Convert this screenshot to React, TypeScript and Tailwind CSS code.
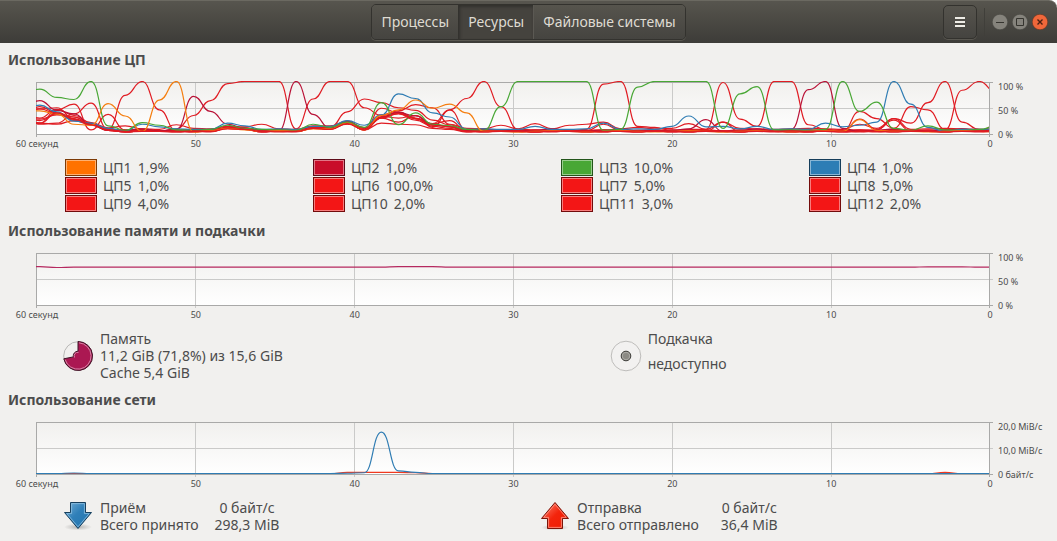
import React, { useState } from "react";

type Line = { color: string; values: number[] };
type ChartProps = {
  id: string;
  lines: Line[];
  labels: string[];
  width?: number;
};

const RED = "#e01b22";
const STEP = 17.08;
const START = -13.3;

const BUSY: [number, number][] = [
  [0, 35], [1, 33], [2, 38], [3, 30], [4, 18], [5, 7],
  [12, 11], [13, 9], [17, 11], [18, 10], [19, 20], [20, 8], [21, 32],
  [22, 40], [23, 30], [24, 18], [25, 14],
];

// fills the quiet parts of a graph, peaks are given as [index, value]
const series = (base: number[], peaks: [number, number][]) => {
  const values = Array.from({ length: 58 }, (_, i) => base[i % base.length]);
  BUSY.forEach(([i, v]) => {
    values[i] = v + base[i % base.length] - 5;
  });
  peaks.forEach(([i, v]) => {
    values[i] = v;
  });
  return values;
};

const cpuLines: Line[] = [
  { color: RED, values: series([4, 5, 3, 6], [[0, 22], [1, 20], [2, 46], [3, 57], [4, 7], [5, 37], [6, 7], [21, 49], [22, 40], [23, 30], [34, 18], [41, 22], [49, 43], [50, 29], [51, 10], [52, 52], [53, 46], [54, 8]]) },
  { color: RED, values: series([6, 5, 7, 4], [[1, 18], [2, 20], [3, 38], [4, 59], [5, 8], [6, 74], [7, 101], [8, 46], [9, 5], [25, 46], [26, 68], [27, 101], [28, 52], [29, 8], [51, 29], [52, 20], [53, 60], [54, 101], [55, 22], [56, 8]]) },
  { color: RED, values: series([3, 5, 4], [[1, 48], [2, 38], [9, 9], [10, 35], [11, 64], [12, 97], [13, 101], [14, 101], [15, 101], [16, 9], [17, 67], [18, 101], [19, 101], [20, 50], [21, 35], [54, 7], [55, 84], [56, 101], [57, 80]]) },
  { color: RED, values: series([5, 7, 6, 8], [[0, 45], [1, 48], [2, 50], [3, 28], [18, 12], [19, 42], [20, 67], [21, 60], [22, 50], [23, 45], [24, 26], [25, 17], [33, 8], [34, 96], [35, 101], [36, 14], [37, 12], [40, 8], [41, 99], [42, 28], [43, 14], [44, 101], [45, 101], [46, 17], [57, 16]]) },
  { color: RED, values: series([8, 9, 10, 9], [[1, 30], [2, 47], [3, 35], [6, 15], [7, 9], [9, 17], [14, 18], [22, 44], [23, 56], [24, 50], [25, 18], [28, 16], [30, 19], [32, 16], [33, 18], [34, 22], [36, 12], [39, 19], [41, 22], [49, 18], [51, 29]]) },
  { color: RED, values: series([4, 3, 5, 4, 6], [[1, 28], [2, 36], [3, 32], [22, 22], [23, 35], [24, 12], [25, 46], [26, 6], [49, 28], [50, 8], [51, 26]]) },
  { color: RED, values: series([6, 7, 5], [[1, 52], [2, 40], [3, 26], [22, 30], [23, 35], [25, 25], [26, 5]]) },
  { color: RED, values: series([4, 4, 3, 5], [[1, 20], [2, 18], [3, 25], [21, 20], [22, 18], [23, 17], [24, 10], [25, 8]]) },
  { color: "#b91237", values: series([5, 4, 6, 9], [[0, 50], [1, 64], [2, 45], [3, 38], [4, 16], [9, 8], [10, 72], [11, 43], [12, 18], [13, 10], [15, 5], [16, 101], [17, 37], [18, 10], [40, 27], [45, 8], [46, 85], [47, 101], [48, 10]]) },
  { color: "#2f7cb3", values: series([9, 8, 8], [[0, 48], [1, 55], [2, 42], [3, 24], [4, 20], [6, 5], [7, 18], [8, 13], [12, 20], [13, 15], [19, 25], [20, 16], [21, 36], [22, 77], [23, 68], [24, 40], [25, 32], [26, 8], [30, 14], [34, 20], [38, 14], [39, 34], [40, 13], [41, 14], [43, 14], [47, 20], [48, 13], [49, 16], [50, 22], [51, 101], [52, 57], [53, 12], [54, 4]]) },
  { color: "#48a735", values: series([7, 6, 8], [[0, 80], [1, 86], [2, 70], [3, 66], [4, 101], [5, 15], [6, 6], [7, 21], [8, 16], [12, 16], [17, 18], [19, 22], [20, 12], [21, 60], [22, 17], [23, 40], [24, 18], [27, 6], [28, 52], [29, 101], [30, 101], [31, 101], [32, 101], [33, 101], [34, 6], [35, 8], [36, 90], [37, 101], [38, 101], [39, 101], [40, 101], [41, 10], [42, 77], [43, 91], [44, 7], [48, 101], [49, 43], [50, 61], [51, 10], [53, 15], [57, 14]]) },
  { color: RED, values: series([5, 4, 5, 4, 3], [[1, 25], [22, 38], [23, 26], [24, 14], [25, 10]]) },
  { color: "#f57e0f", values: series([4, 3, 4, 5], [[0, 45], [1, 44], [2, 38], [3, 18], [4, 16], [5, 58], [6, 34], [7, 4], [8, 65], [9, 101], [10, 3], [21, 35], [22, 46], [23, 65], [24, 49], [25, 57], [26, 40], [27, 4], [49, 27], [50, 6], [51, 4]]) },
  { color: RED, values: series([3, 4, 4], [[1, 20], [2, 40], [3, 32]]) },
];

const flat = (base: number, peaks: [number, number][] = []) => {
  const values = Array.from({ length: 58 }, () => base);
  peaks.forEach(([i, v]) => {
    values[i] = v;
  });
  return values;
};

const memoryLines: Line[] = [
  { color: "#b5295f", values: flat(72.5, [[0, 74], [1, 73.5], [2, 71.8], [22, 73.5], [23, 73.5], [24, 73.5], [53, 73.2], [54, 73.2], [55, 73.2]]) },
];

const networkLines: Line[] = [
  { color: "#f0391f", values: flat(0, [[19, 2], [20, 2], [21, 2], [22, 2], [23, 1.5], [54, 2]]) },
  { color: "#2f7cb3", values: flat(0, [[3, 1], [19, 0.5], [20, 1.5], [21, 80.5], [22, 5], [23, 2]]) },
];

const toPath = (values: number[]) =>
  values
    .map((v, i) => {
      const x = START + i * STEP;
      const y = 52.5 - v * 0.515;
      if (i === 0) return `M${x} ${y}`;
      const mid = x - STEP / 2;
      const prev = 52.5 - values[i - 1] * 0.515;
      return `C${mid} ${prev} ${mid} ${y} ${x} ${y}`;
    })
    .join(" ");

const gridX = [159.5, 318.5, 477.5, 636.5, 795.5];

const Chart = ({ id, lines, labels, width = 1.2 }: ChartProps) => {
  return (
    <div className="flex pl-9 mt-3 text-[9px] leading-[10px]">
      <div className="flex-1">
        <svg
          className="block w-full h-14"
          viewBox="0 0 957 56"
          preserveAspectRatio="none"
        >
          <defs>
            <linearGradient id={`${id}-bg`} x1="0" y1="0" x2="0" y2="1">
              <stop offset="0" stopColor="#f1f0ee" />
              <stop offset="1" stopColor="#ffffff" />
            </linearGradient>
            <clipPath id={`${id}-clip`}>
              <rect x="0" y="0" width="953" height="56" />
            </clipPath>
          </defs>
          <rect x="0" y="1" width="953" height="53" fill={`url(#${id}-bg)`} />
          <g stroke="#cacac9">
            {gridX.map((x) => (
              <path key={x} d={`M${x} 1V56`} />
            ))}
            <path d="M0 27.5H957" />
          </g>
          <path
            d="M0 1.5H957M0 53.5H957M0.5 1V56M953.5 1V56"
            stroke="#a9a9a8"
            fill="none"
          />
          <g clipPath={`url(#${id}-clip)`} fill="none" strokeWidth={width}>
            {lines.map((line, i) => (
              <path key={i} d={toPath(line.values)} stroke={line.color} />
            ))}
          </g>
        </svg>
        <div className="flex justify-between mt-[2px] pl-px pr-[3px]">
          {["60 секунд", "50", "40", "30", "20", "10", "0"].map((label) => (
            <span
              key={label}
              className="w-0 flex justify-center whitespace-nowrap"
            >
              {label}
            </span>
          ))}
        </div>
      </div>
      <div className="w-16 h-[59px] pl-[5px] pt-px flex flex-col justify-between whitespace-nowrap">
        {labels.map((label) => (
          <span key={label}>{label}</span>
        ))}
      </div>
    </div>
  );
};

const cpus = [
  { name: "ЦП1", value: "1,9%", style: "bg-[#ff7200] border-[#7c3a05]" },
  { name: "ЦП2", value: "1,0%", style: "bg-[#c90d2a] border-[#5e0a18]" },
  { name: "ЦП3", value: "10,0%", style: "bg-[#48a735] border-[#22551a]" },
  { name: "ЦП4", value: "1,0%", style: "bg-[#2d7db5] border-[#153d5a]" },
  { name: "ЦП5", value: "1,0%", style: "bg-[#f31616] border-[#730b0b]" },
  { name: "ЦП6", value: "100,0%", style: "bg-[#f31616] border-[#730b0b]" },
  { name: "ЦП7", value: "5,0%", style: "bg-[#f31616] border-[#730b0b]" },
  { name: "ЦП8", value: "5,0%", style: "bg-[#f31616] border-[#730b0b]" },
  { name: "ЦП9", value: "4,0%", style: "bg-[#f31616] border-[#730b0b]" },
  { name: "ЦП10", value: "2,0%", style: "bg-[#f31616] border-[#730b0b]" },
  { name: "ЦП11", value: "3,0%", style: "bg-[#f31616] border-[#730b0b]" },
  { name: "ЦП12", value: "2,0%", style: "bg-[#f31616] border-[#730b0b]" },
];

const tabs = ["Процессы", "Ресурсы", "Файловые системы"];

const Header = () => {
  const [active, setActive] = useState<string>("Ресурсы");

  return (
    <header className="h-[43px] grid grid-cols-[1fr_auto_1fr] items-center rounded-tr-lg bg-linear-to-b from-[#57554e] to-[#3d3c38] border-t border-[#6b6961]">
      <div />
      <nav className="flex h-9 rounded-[5px] border border-[#33322e] overflow-hidden shadow-[0_1px_0_#5a5851]">
        {tabs.map((tab) => (
          <button
            key={tab}
            type="button"
            onClick={() => setActive(tab)}
            className={`px-[9px] text-sm border-l first:border-l-0 ${
              active === tab
                ? "bg-[#45433e] border-[#33322e] text-[#dfdbd2] shadow-[inset_1px_2px_3px_#32312d]"
                : "bg-linear-to-b from-[#56544d] to-[#454440] border-[#5b5953] text-[#dfdbd2]"
            }`}
          >
            {tab}
          </button>
        ))}
      </nav>
      <div className="flex items-center justify-end pr-[9px]">
        <button
          type="button"
          aria-label="Меню"
          className="w-[34px] h-[34px] flex items-center justify-center rounded-[5px] border border-[#33322e] bg-linear-to-b from-[#56544d] to-[#454440] shadow-[0_1px_0_#5a5851]"
        >
          <svg width="10" height="10" viewBox="0 0 10 10">
            <path d="M0 1H10M0 5H10M0 9H10" stroke="#eeece6" strokeWidth="2" />
          </svg>
        </button>
        <div className="w-px h-7 mx-[7px] bg-[#403f3a]" />
        <div className="flex gap-1 pb-px">
          <button type="button" aria-label="Свернуть">
            <svg className="block" width="16" height="16" viewBox="0 0 16 16">
              <circle cx="8" cy="8" r="7.8" fill="#85837c" stroke="#45443f" strokeWidth="0.6" />
              <path d="M4 8.5H12" stroke="#35342f" />
            </svg>
          </button>
          <button type="button" aria-label="Развернуть">
            <svg className="block" width="16" height="16" viewBox="0 0 16 16">
              <circle cx="8" cy="8" r="7.8" fill="#85837c" stroke="#45443f" strokeWidth="0.6" />
              <path d="M4.5 4.5H11.5V11.5H4.5Z" stroke="#35342f" fill="none" />
            </svg>
          </button>
          <button type="button" aria-label="Закрыть">
            <svg className="block" width="16" height="16" viewBox="0 0 16 16">
              <circle cx="8" cy="8" r="7.8" fill="#f0673a" stroke="#5a3424" strokeWidth="0.6" />
              <path d="M5.5 5.5L10.5 10.5M10.5 5.5L5.5 10.5" stroke="#4a2012" strokeWidth="1.4" />
            </svg>
          </button>
        </div>
      </div>
    </header>
  );
};

const Title = ({ children }: { children: React.ReactNode }) => (
  <h2 className="pl-2 text-sm leading-[18px] font-bold">{children}</h2>
);

const MemoryPie = () => (
  <svg width="30" height="32" viewBox="0 0 30 32">
    <circle cx="15" cy="16" r="14.3" fill="#f1f0ee" stroke="#b9b8b6" />
    <path d="M15 1.5A14.5 14.5 0 1 1 0.8 18.8L10.3 16.9A4.8 4.8 0 0 1 15 11.2Z" fill="#ab1852" stroke="#3d1526" />
    <path d="M16 2.8A13.2 13.2 0 1 1 2.2 19.6" fill="none" stroke="#d583a5" />
    <path d="M11.5 17.5A3.6 3.6 0 0 1 15.5 12.4" fill="none" stroke="#d583a5" />
  </svg>
);

const SwapPie = () => (
  <svg width="32" height="32" viewBox="0 0 32 32">
    <circle cx="16" cy="16" r="14.8" fill="#f2f1f0" stroke="#bebdbb" />
    <circle cx="16" cy="16" r="4.8" fill="#8b8a84" stroke="#33332f" />
    <circle cx="16" cy="16" r="3.8" fill="none" stroke="#b6b5b0" strokeWidth="0.8" />
  </svg>
);

const DownArrow = () => (
  <svg width="30" height="30" viewBox="0 0 30 30">
    <defs>
      <linearGradient id="down" x1="0" y1="0" x2="1" y2="1">
        <stop offset="0" stopColor="#75afd6" />
        <stop offset="0.45" stopColor="#2f7fb8" />
        <stop offset="1" stopColor="#2274ae" />
      </linearGradient>
      <radialGradient id="down-shade">
        <stop offset="0" stopColor="#b5b4b2" />
        <stop offset="1" stopColor="#f1f0ee" />
      </radialGradient>
    </defs>
    <ellipse cx="15" cy="26" rx="14" ry="3.5" fill="url(#down-shade)" />
    <path d="M7.5 1.5H22.5V11.5H28.5L15 27.5L1.5 11.5H7.5Z" fill="url(#down)" stroke="#173f5d" />
    <path d="M8.6 2.6H21.4V12.6H26.2L15 25.8L3.8 12.6H8.6Z" fill="none" stroke="#8fc0e0" strokeWidth="0.8" />
  </svg>
);

const UpArrow = () => (
  <svg width="30" height="30" viewBox="0 0 30 30">
    <defs>
      <linearGradient id="up" x1="0" y1="0" x2="1" y2="1">
        <stop offset="0" stopColor="#ff8a76" />
        <stop offset="0.5" stopColor="#f3240c" />
        <stop offset="1" stopColor="#ee1c00" />
      </linearGradient>
      <radialGradient id="up-shade">
        <stop offset="0" stopColor="#b5b4b2" />
        <stop offset="1" stopColor="#f1f0ee" />
      </radialGradient>
    </defs>
    <ellipse cx="15" cy="26.5" rx="14" ry="3" fill="url(#up-shade)" />
    <path d="M15 1.5L28.5 17.5H22.5V27.5H7.5V17.5H1.5Z" fill="url(#up)" stroke="#7a160b" />
    <path d="M15 3.2L26.2 16.4H21.4V26.4H8.6V16.4H3.8Z" fill="none" stroke="#ff9c8c" strokeWidth="0.8" />
  </svg>
);

const App = () => {
  return (
    <div className="min-h-screen bg-white text-[#4c4c4c] font-['Noto_Sans','Open_Sans',sans-serif]">
      <Header />
      <main className="bg-[#f1f0ee] pt-2 pb-2 flex flex-col gap-[9px]">
        <section>
          <Title>Использование ЦП</Title>
          <Chart id="cpu" lines={cpuLines} labels={["100 %", "50 %", "0 %"]} />
          <div className="grid grid-cols-4 pl-[65px] mt-[10px] text-sm leading-[18px]">
            {cpus.map((cpu) => (
              <div key={cpu.name} className="h-[18px] flex gap-[6px]">
                <button
                  type="button"
                  aria-label={cpu.name}
                  className={`w-8 h-[17px] border shadow-[inset_0_0_0_1px_#ffffff70] ${cpu.style}`}
                />
                <span>{cpu.name}</span>
                <span>{cpu.value}</span>
              </div>
            ))}
          </div>
        </section>

        <section className="pb-px">
          <Title>Использование памяти и подкачки</Title>
          <Chart id="memory" lines={memoryLines} labels={["100 %", "50 %", "0 %"]} />
          <div className="grid grid-cols-[55fr_45fr] pl-[63px] mt-[10px] text-sm leading-[17px]">
            <div className="flex items-center gap-[7px]">
              <button type="button" aria-label="Цвет памяти">
                <MemoryPie />
              </button>
              <div>
                <p>Память</p>
                <p>11,2 GiB (71,8%) из 15,6 GiB</p>
                <p>Cache 5,4 GiB</p>
              </div>
            </div>
            <div className="flex items-center gap-[6px]">
              <button type="button" aria-label="Цвет подкачки">
                <SwapPie />
              </button>
              <div className="h-full flex flex-col gap-2">
                <p>Подкачка</p>
                <p>недоступно</p>
              </div>
            </div>
          </div>
        </section>

        <section>
          <Title>Использование сети</Title>
          <Chart
            id="network"
            lines={networkLines}
            labels={["20,0 MiB/c", "10,0 MiB/c", "0 байт/с"]}
          />
          <div className="grid grid-cols-[48fr_52fr] pl-[63px] mt-[10px] text-sm leading-[17px]">
            <div className="flex items-center gap-[7px]">
              <button type="button" aria-label="Цвет приёма">
                <DownArrow />
              </button>
              <div className="grid grid-cols-[auto_auto] gap-x-4">
                <span>Приём</span>
                <span className="text-center">0 байт/с</span>
                <span>Всего принято</span>
                <span className="text-center">298,3 MiB</span>
              </div>
            </div>
            <div className="flex items-center gap-[7px]">
              <button type="button" aria-label="Цвет отправки">
                <UpArrow />
              </button>
              <div className="grid grid-cols-[auto_auto] gap-x-[22px]">
                <span>Отправка</span>
                <span className="text-center">0 байт/с</span>
                <span>Всего отправлено</span>
                <span className="text-center">36,4 MiB</span>
              </div>
            </div>
          </div>
        </section>
      </main>
    </div>
  );
};

export default App;
